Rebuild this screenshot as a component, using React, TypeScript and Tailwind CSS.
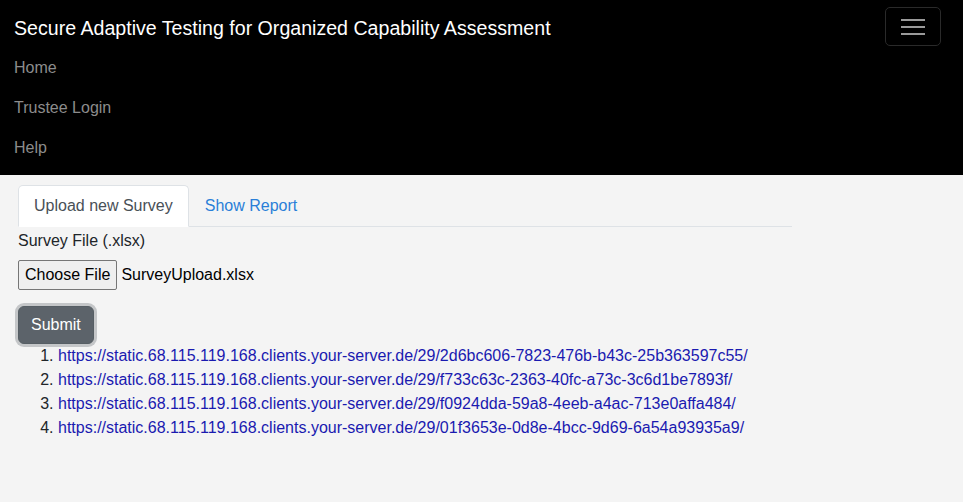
import { useState } from "react";

const links = [
  "https://static.68.115.119.168.clients.your-server.de/29/2d6bc606-7823-476b-b43c-25b363597c55/",
  "https://static.68.115.119.168.clients.your-server.de/29/f733c63c-2363-40fc-a73c-3c6d1be7893f/",
  "https://static.68.115.119.168.clients.your-server.de/29/f0924dda-59a8-4eeb-a4ac-713e0affa484/",
  "https://static.68.115.119.168.clients.your-server.de/29/01f3653e-0d8e-4bcc-9d69-6a54a93935a9/",
];

export default function App() {
  const [tab, setTab] = useState("upload");

  return (
    <div className="min-h-[502px] bg-[#f4f4f4] text-[#212529] font-['Liberation_Sans',Arial,sans-serif]">
      {/* navbar */}
      <nav className="bg-black px-[14px] pt-[7px] pb-[7px]">
        <div className="flex items-start justify-between">
          <a href="#" className="text-white text-[19.6px] leading-[30px] mt-[6px]">
            Secure Adaptive Testing for Organized Capability Assessment
          </a>
          <button className="mr-[8px] w-[56px] h-[39px] rounded-[5px] border border-[#2a2a2a] flex items-center justify-center">
            <svg width="26" height="20" viewBox="0 0 26 20">
              <path d="M1 3h24M1 10h24M1 17h24" stroke="#9a9a9a" strokeWidth="2" />
            </svg>
          </button>
        </div>
        <ul className="mt-[2px] text-[16px] text-[#8c8c8c]">
          <li className="py-[8px] leading-[24px]"><a href="#">Home</a></li>
          <li className="py-[8px] leading-[24px]"><a href="#">Trustee Login</a></li>
          <li className="py-[8px] leading-[24px]"><a href="#">Help</a></li>
        </ul>
      </nav>

      {/* content */}
      <main className="px-[18px] pt-[10px] text-[16px]">
        <div className="w-[774px] flex border-b border-[#dee2e6]">
          <button
            onClick={() => setTab("upload")}
            className={`px-[15px] h-[42px] rounded-t-[5px] border -mb-px ${tab === "upload" ? "bg-white border-[#dee2e6] border-b-white text-[#495057]" : "border-transparent text-[#2a7fd8]"}`}
          >
            Upload new Survey
          </button>
          <button
            onClick={() => setTab("report")}
            className={`px-[15px] h-[42px] rounded-t-[5px] border -mb-px ${tab === "report" ? "bg-white border-[#dee2e6] border-b-white text-[#495057]" : "border-transparent text-[#2a7fd8]"}`}
          >
            Show Report
          </button>
        </div>

        <div className="pt-[2px]">
          <label className="block leading-[24px]">Survey File (.xlsx)</label>
          <div className="mt-[7px] flex items-center">
            <span className="h-[30px] px-[6px] flex items-center bg-[#efefef] border border-[#767676] rounded-[2px] text-[#000]">
              Choose File
            </span>
            <span className="ml-[4px] text-[#000]">SurveyUpload.xlsx</span>
          </div>
          <button className="mt-[16px] h-[38px] px-[12px] rounded-[6px] bg-[#5c636a] text-white border border-[#565e64] shadow-[0_0_0_3px_#c4c6c8]">
            Submit
          </button>
        </div>

        <ol className="list-decimal pl-[40px] mt-0 leading-[24px]">
          {links.map((l) => (
            <li key={l}>
              <a href={l} className="text-[#1a1ab0]">{l}</a>
            </li>
          ))}
        </ol>
      </main>
    </div>
  );
}
